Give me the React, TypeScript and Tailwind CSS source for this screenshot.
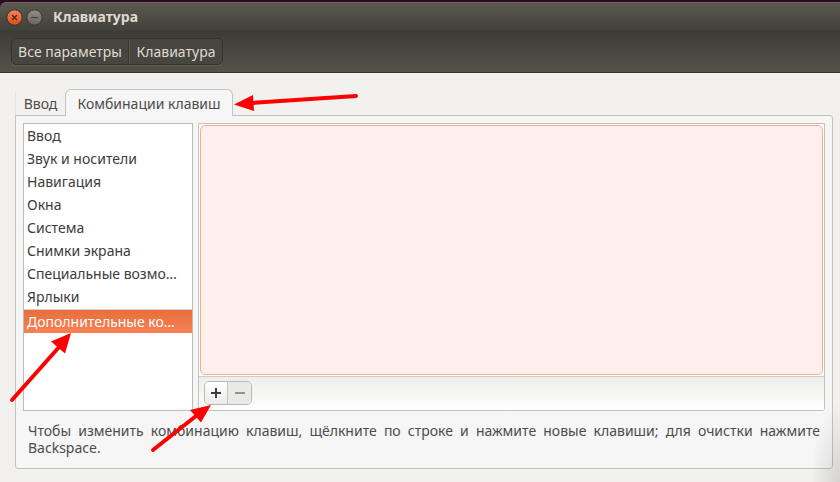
import { useState } from 'react'

const sections = [
  'Ввод',
  'Звук и носители',
  'Навигация',
  'Окна',
  'Система',
  'Снимки экрана',
  'Специальные возмо…',
  'Ярлыки',
]

const customSection = 'Дополнительные ко…'

function TitleBar() {
  return (
    <header className="flex h-[29px] items-center gap-[3px] rounded-tl-md border-t border-[#6b685e] bg-linear-to-b from-[#5c5a50] to-[#403f3a] pl-[6px]">
      <button type="button" aria-label="Закрыть">
        <svg width="17" height="17" viewBox="0 0 17 17">
          <defs>
            <linearGradient id="close-fill" x1="0" y1="0" x2="0" y2="1">
              <stop offset="0" stopColor="#f58560" />
              <stop offset="1" stopColor="#df4a16" />
            </linearGradient>
          </defs>
          <circle cx="8.500" cy="8.500" r="7.700" fill="url(#close-fill)" stroke="#35332d" />
          <path d="M6 6l5 5M11 6l-5 5" stroke="#49291b" strokeWidth="1.300" />
        </svg>
      </button>
      <button type="button" aria-label="Свернуть">
        <svg width="17" height="17" viewBox="0 0 17 17">
          <defs>
            <linearGradient id="min-fill" x1="0" y1="0" x2="0" y2="1">
              <stop offset="0" stopColor="#918f87" />
              <stop offset="1" stopColor="#65635b" />
            </linearGradient>
          </defs>
          <circle cx="8.500" cy="8.500" r="7.700" fill="url(#min-fill)" stroke="#35332d" />
          <path d="M5 8.500h7" stroke="#3b3934" strokeWidth="1" />
        </svg>
      </button>
      <h1 className="ml-[7px] text-[14px] leading-5 font-bold text-[#dfdbd2]">Клавиатура</h1>
    </header>
  )
}

function Breadcrumbs() {
  return (
    <nav className="flex h-[42px] items-center border-b border-[#35342f] bg-linear-to-b from-[#3c3b37] to-[#555248] pl-[11px]">
      <div className="flex h-[27px] rounded-[5px] border border-[#33322e] bg-[#464540] text-[14px] text-[#dfdbd2] shadow-[0_1px_0_#605d54]">
        <button type="button" className="w-[117px] whitespace-nowrap border-r border-[#35342f]">
          Все параметры
        </button>
        <button type="button" className="w-[93px] whitespace-nowrap border-l border-[#5b584f]">
          Клавиатура
        </button>
      </div>
    </nav>
  )
}

// Red pointers drawn over the window
function Arrows() {
  return (
    <svg className="pointer-events-none absolute top-0 left-0" width="400" height="482" viewBox="0 0 400 482">
      <g stroke="#fe0000" strokeWidth="4" strokeLinecap="round">
        <path d="M356 96L252 103" />
        <path d="M12 400L60 346" />
        <path d="M153 450L196 416" />
      </g>
      <g fill="#fe0000">
        <path d="M234 104.500L253 95L254 111Z" />
        <path d="M71 333L51 341.500L65 353.500Z" />
        <path d="M211 405L190 410L201 422.500Z" />
      </g>
    </svg>
  )
}

export default function App() {
  const [selected, setSelected] = useState(customSection)

  return (
    <div className="relative flex min-h-screen flex-col overflow-hidden bg-[#f2f1ef] font-['Noto_Sans',sans-serif] text-[#3c3c3c]">
      <div className="bg-[#300a24] pt-[2px]">
        <TitleBar />
      </div>
      <Breadcrumbs />

      <main className="flex flex-1 flex-col pt-4 pr-[7px] pb-[13px] pl-[15px]">
        <div role="tablist" className="z-10 -mb-px flex items-end text-[14px] text-[#4c4c4c]">
          <button type="button" role="tab" aria-selected={false} className="mb-px h-[24px] w-[50px] border-l border-[#e6e4e1]">
            Ввод
          </button>
          <button
            type="button"
            role="tab"
            aria-selected={true}
            className="h-[27px] w-[168px] whitespace-nowrap rounded-t-md border border-b-0 border-[#c4c2be] bg-[#f6f6f6]"
          >
            Комбинации клавиш
          </button>
        </div>

        <section className="flex flex-1 flex-col rounded-b-[3px] rounded-tr-[3px] border border-[#c4c2be] bg-[#f6f6f6] p-[7px]">
          <div className="flex flex-1 gap-[5px]">
            <ul className="w-[170px] shrink-0 border border-[#bdbbb7] bg-white text-[14px]">
              {sections.map((name) => (
                <li key={name}>
                  <button
                    type="button"
                    onClick={() => setSelected(name)}
                    className={`block h-[23px] w-full whitespace-nowrap pl-[3px] text-left ${
                      selected === name ? 'bg-linear-to-b from-[#e86f3c] to-[#f88053] text-white' : ''
                    }`}
                  >
                    {name}
                  </button>
                </li>
              ))}
              <li className="mt-px border-t border-[#d5d3cf]">
                <button
                  type="button"
                  onClick={() => setSelected(customSection)}
                  className={`block h-[23px] w-full whitespace-nowrap pl-[3px] text-left ${
                    selected === customSection ? 'bg-linear-to-b from-[#e86f3c] to-[#f88053] text-white' : ''
                  }`}
                >
                  {customSection}
                </button>
              </li>
            </ul>

            <div className="flex min-w-0 flex-1 flex-col rounded-b-[3px] border border-[#c4c2be] bg-white">
              <div className="flex flex-1 p-px">
                <div className="flex-1 rounded-[5px] border border-[#f4ae94] bg-[#feefeb]" />
              </div>
              <div className="flex h-[34px] items-start border-t border-[#cfcdc9] bg-linear-to-b from-[#eeedea] to-white pt-1 pl-[5px]">
                <div className="flex h-[24px] overflow-hidden rounded-[5px] border border-[#b9b8b5]">
                  <button
                    type="button"
                    aria-label="Добавить"
                    className="flex w-[23px] items-center justify-center border-r border-[#c6c5c2] bg-linear-to-b from-white to-[#ebebea]"
                  >
                    <svg width="10" height="10" viewBox="0 0 10 10">
                      <path d="M0 5h10M5 0v10" stroke="#3c3c3c" strokeWidth="2" />
                    </svg>
                  </button>
                  <button
                    type="button"
                    disabled
                    aria-label="Удалить"
                    className="flex w-[23px] items-center justify-center bg-[#e9e9e8]"
                  >
                    <svg width="10" height="10" viewBox="0 0 10 10">
                      <path d="M0 5h10" stroke="#95928d" strokeWidth="2" />
                    </svg>
                  </button>
                </div>
              </div>
            </div>
          </div>

          <p className="px-[5px] pt-[11px] pb-[5px] text-justify text-[14px] leading-[17px] text-[#4c4c4c]">
            Чтобы изменить комбинацию клавиш, щёлкните по строке и нажмите новые клавиши; для очистки нажмите
            Backspace.
          </p>
        </section>
      </main>

      <div className="pointer-events-none absolute right-0 bottom-0 h-[80px] w-[30px] bg-radial-[at_100%_100%] from-black/12 to-transparent to-70%" />
      <Arrows />
    </div>
  )
}
